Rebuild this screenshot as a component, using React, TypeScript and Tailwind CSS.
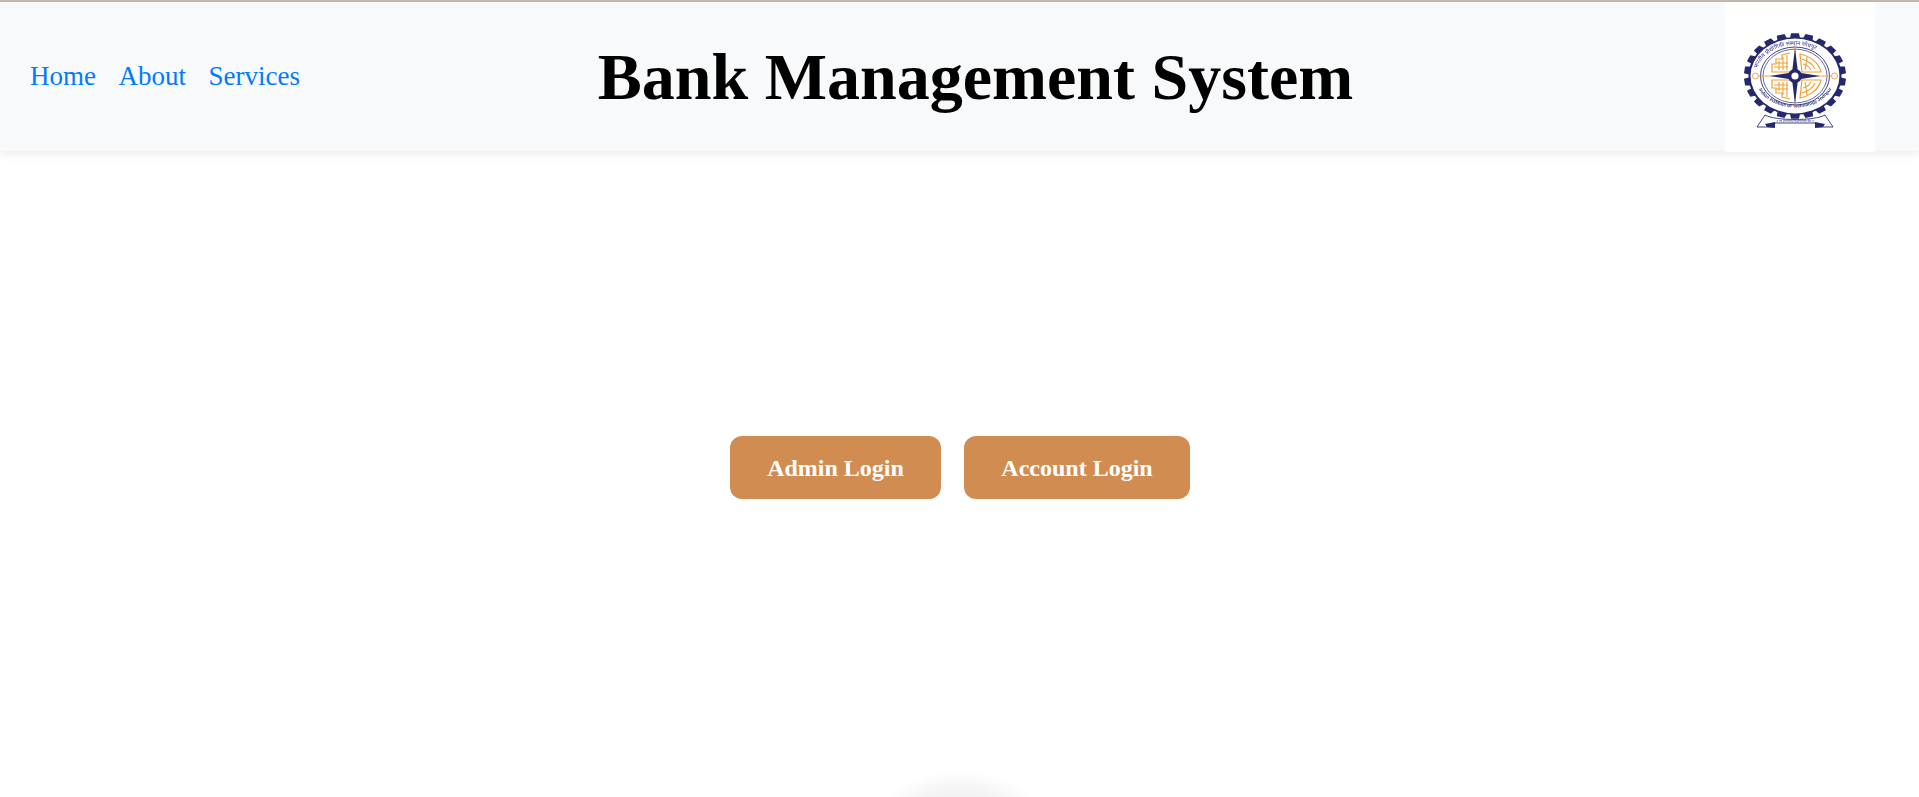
const serif = "font-['Liberation_Serif',serif]";

const gearTeeth = Array.from({ length: 22 }, (_, i) => (i * 360) / 22);

function Logo() {
  return (
    <svg viewBox="0 0 120 115" width="120" height="115" className="blur-[0.35px]" aria-label="Institute crest">
      <defs>
        <path id="crest-top" d="M 26 56 A 39 31 0 0 1 104 56" />
        <path id="crest-bottom" d="M 25 61 A 41 34 0 0 0 105 61" />
      </defs>
      <g transform="translate(65 56) scale(1 0.84)">
        {gearTeeth.map((deg) => (
          <path key={deg} d="M -5 -45 L -4 -51 L 4 -51 L 5 -45 Z" fill="#25286f" transform={`rotate(${deg})`} />
        ))}
        <circle r="46.5" fill="#25286f" />
        <circle r="44.5" fill="#fff" />
        <circle r="34.5" fill="none" stroke="#2f327c" strokeWidth="1" />
        <circle r="32" fill="none" stroke="#4a4d95" strokeWidth="0.9" />
      </g>
      <text fontFamily="'Noto Sans',sans-serif" fontSize="5.6" fill="#2f327c">
        <textPath href="#crest-top" startOffset="7%">भारतीय प्रौद्योगिकी संस्थान जोधपुर</textPath>
      </text>
      <text fontFamily="'Liberation Sans',sans-serif" fontSize="4.6" fontWeight="700" fill="#2f327c">
        <textPath href="#crest-bottom" startOffset="9%">Indian Institute of Technology Jodhpur</textPath>
      </text>
      <circle cx="25.5" cy="56" r="3" fill="#fff" stroke="#e8a858" strokeWidth="1" />
      <circle cx="104.5" cy="56" r="3" fill="#fff" stroke="#e8a858" strokeWidth="1" />
      <g fill="none" stroke="#f29f30" strokeWidth="1.2">
        <path d="M 60 33 L 52 35 L 52 39 L 46 39 L 46 44 L 42 44 L 42 52 L 60 52" />
        <path d="M 60 79 L 52 77 L 52 73 L 46 73 L 46 68 L 42 68 L 42 60 L 60 60" />
        <path d="M 49 41 L 49 50 M 53 37 L 53 50 M 57 35 L 57 50 M 44 47 L 58 47 M 46 43 L 58 43" strokeWidth="1.1" />
        <path d="M 49 71 L 49 62 M 53 75 L 53 62 M 57 77 L 57 62 M 44 65 L 58 65 M 46 69 L 58 69" strokeWidth="1.1" />
        <path d="M 70 34 C 80 36 89 43 91 52 L 72 52 Z" />
        <path d="M 70 78 C 80 76 89 69 91 60 L 72 60 Z" />
        <path d="M 72 39 Q 82 42 85 49 M 73 44 Q 78 45 81 50 M 77 37 L 75 50" strokeWidth="1.1" />
        <path d="M 72 73 Q 82 70 85 63 M 73 68 Q 78 67 81 62 M 77 75 L 75 62" strokeWidth="1.1" />
        <path d="M 29 56 L 101 56 M 65 25 L 65 87" strokeWidth="0.9" />
      </g>
      <path d="M 65 28 L 68 52.5 L 90 56 L 68 59.5 L 65 84 L 62 59.5 L 40 56 L 62 52.5 Z" fill="#25286f" />
      <circle cx="65" cy="56" r="7" fill="#25286f" />
      <circle cx="65" cy="56" r="3.6" fill="#fff" />
      <path d="M 35 95 L 27 107 L 43 107 L 45 103 L 85 103 L 87 107 L 103 107 L 95 95 C 85 101 45 101 35 95 Z" fill="#fff" stroke="#2f327c" strokeWidth="0.9" />
      <path d="M 35 104 L 45 102 L 45 108 L 37 107 Z M 95 104 L 85 102 L 85 108 L 93 107 Z" fill="#25286f" />
      <text x="65" y="101.5" textAnchor="middle" fontFamily="'Noto Sans',sans-serif" fontSize="3.4" fill="#2f327c">॥ त्वं ज्ञानमयो विज्ञानमयोऽसि ॥</text>
    </svg>
  );
}

export default function App() {
  return (
    <div className={`relative flex h-[797px] flex-col overflow-hidden bg-white ${serif}`}>
      <header className="flex h-[151px] items-stretch border-t-2 border-[#c4b5b0] bg-[#f8f9fa] pl-[30px] pr-[44px] shadow-[0_3px_10px_rgba(0,0,0,0.08)]">
        <nav className="flex w-[568px] items-center gap-[22.5px] pb-[1px] text-[27px] text-[#007bff]">
          <a href="#">Home</a>
          <a href="#">About</a>
          <a href="#">Services</a>
        </nav>
        <h1 className="flex w-[755px] items-center justify-center whitespace-nowrap pb-[1px] text-[66px] font-bold text-black">
          Bank Management System
        </h1>
        <div className="z-10 -mb-px ml-auto w-[150px] bg-white pl-[5px] pt-[18px]">
          <Logo />
        </div>
      </header>

      <main className="flex flex-1 items-center justify-center">
        <div className="mb-[13px] ml-[1px] flex gap-[23px]">
          <button className="h-[63px] w-[211px] rounded-xl bg-[#d18d51] text-[24px] font-bold text-white">Admin Login</button>
          <button className="h-[63px] w-[226px] rounded-xl bg-[#d18d51] text-[24px] font-bold text-white">Account Login</button>
        </div>
      </main>

      <div className="absolute bottom-[-73px] left-[875px] h-[100px] w-[170px] bg-[radial-gradient(closest-side,rgba(0,0,0,0.11),rgba(0,0,0,0))]" />
    </div>
  );
}
